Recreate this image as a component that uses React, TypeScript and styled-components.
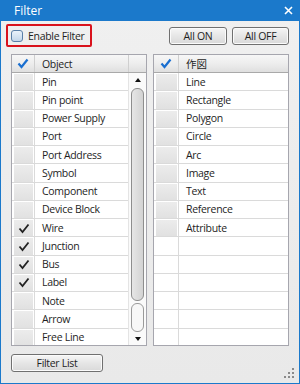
import React from 'react';
import styled, { createGlobalStyle } from 'styled-components';

const Global = createGlobalStyle`
  html, body { margin: 0; padding: 0; background: #ffffff; }
  body { font-family: "Open Sans", "Noto Sans", "Noto Sans CJK JP", sans-serif; }
`;

const Win = styled.div`
  width: 300px;
  height: 384px;
  box-sizing: border-box;
  border: 1px solid #1b79cb;
  border-top: none;
  display: flex;
  flex-direction: column;
  background: linear-gradient(180deg, #f0f0f0 0%, #e9e9e9 100%);
`;

const TitleBar = styled.div`
  height: 21px;
  flex: none;
  margin: 0 -1px;
  background: #1b79cb;
  color: #ffffff;
  display: flex;
  align-items: center;
  justify-content: space-between;
  padding: 0 7px 0 14px;
  font-size: 12px;
`;

const Body = styled.div`
  flex: 1;
  display: flex;
  flex-direction: column;
  padding: 3px 10px 0 10px;
  position: relative;
`;

const TopRow = styled.div`
  height: 23px;
  display: flex;
  align-items: center;
  justify-content: space-between;
`;

const Highlight = styled.div`
  margin-left: -5px;
  height: 23px;
  width: 86px;
  box-sizing: border-box;
  border: 2px solid #d9121c;
  border-radius: 2px;
  display: flex;
  align-items: center;
  gap: 5px;
  padding-left: 3px;
  font-size: 10.5px;
  letter-spacing: -0.3px;
  color: #1e1e1e;
`;

const Box = styled.span`
  width: 12px;
  height: 12px;
  box-sizing: border-box;
  border: 1px solid #5a7fa8;
  border-radius: 3px;
  background: linear-gradient(180deg, #eaf2fb 0%, #c3d6ea 100%);
  display: inline-block;
`;

const Buttons = styled.div`
  display: flex;
  gap: 5px;
`;

const Btn = styled.div<{ $w: number }>`
  width: ${(p) => p.$w}px;
  height: 18px;
  box-sizing: border-box;
  border: 1px solid #707070;
  border-radius: 3px;
  background: linear-gradient(180deg, #f6f6f6 0%, #e6e6e6 50%, #d9d9d9 100%);
  box-shadow: inset 0 0 0 1px #fbfbfb;
  display: flex;
  align-items: center;
  justify-content: center;
  font-size: 10.5px;
  letter-spacing: -0.3px;
  color: #1e1e1e;
`;

const Grids = styled.div`
  margin-top: 7px;
  height: 292px;
  display: flex;
  gap: 6px;
`;

const Grid = styled.div`
  width: 136px;
  box-sizing: border-box;
  border: 1px solid #a6a6ae;
  background: #ffffff;
  display: flex;
  flex-direction: column;
  overflow: hidden;
`;

const Header = styled.div<{ $cols: string }>`
  height: 18px;
  flex: none;
  box-sizing: border-box;
  display: grid;
  grid-template-columns: ${(p) => p.$cols};
  background: linear-gradient(180deg, #f7f7f7 0%, #ececec 55%, #dfdfdf 100%);
  border-bottom: 1px solid #a9a9a9;
`;

const HCell = styled.div<{ $center?: boolean; $cjk?: boolean }>`
  display: flex;
  align-items: center;
  justify-content: ${(p) => (p.$center ? 'center' : 'flex-start')};
  padding-left: ${(p) => (p.$center ? 0 : 7)}px;
  border-right: 1px solid #cfcfcf;
  font-size: 10.5px;
  letter-spacing: ${(p) => (p.$cjk ? 0 : -0.3)}px;
  font-family: ${(p) => (p.$cjk ? '"Noto Sans CJK JP", sans-serif' : 'inherit')};
  color: #1e1e1e;
  &:last-child { border-right: none; }
`;

const ListArea = styled.div`
  flex: 1;
  display: flex;
  min-height: 0;
`;

const List = styled.div`
  flex: 1;
  display: flex;
  flex-direction: column;
`;

const Row = styled.div<{ $cols: string }>`
  height: 18.25px;
  flex: none;
  box-sizing: border-box;
  display: grid;
  grid-template-columns: ${(p) => p.$cols};
  border-bottom: 1px solid #dadada;
`;

const CheckCell = styled.div`
  box-sizing: border-box;
  border-right: 1px solid #dadada;
  padding: 1px 1px 0 2px;
  display: flex;
`;

const CheckFill = styled.div`
  flex: 1;
  background: linear-gradient(180deg, #ececec 0%, #e1e1e1 100%);
  display: flex;
  align-items: center;
  justify-content: center;
`;

const TextCell = styled.div`
  display: flex;
  align-items: center;
  padding-left: 7px;
  font-size: 10.5px;
  letter-spacing: -0.3px;
  color: #1e1e1e;
  white-space: nowrap;
`;

const Scroll = styled.div`
  width: 17px;
  flex: none;
  display: flex;
  flex-direction: column;
  align-items: center;
  background: #fafafa;
  border-left: 1px solid #e4e4e4;
`;

const Arrow = styled.div<{ $down?: boolean }>`
  height: 13px;
  flex: none;
  display: flex;
  align-items: center;
  justify-content: center;
  &::after {
    content: '';
    border-left: 3.5px solid transparent;
    border-right: 3.5px solid transparent;
    ${(p) => (p.$down ? 'border-top: 4px solid #111;' : 'border-bottom: 4px solid #111;')}
  }
`;

const Track = styled.div`
  flex: 1;
  width: 13px;
  display: flex;
  flex-direction: column;
  gap: 2px;
  padding-top: 2px;
`;

const Thumb = styled.div`
  flex: 1;
  box-sizing: border-box;
  border: 1px solid #8e8e8e;
  border-radius: 6px;
  background: linear-gradient(90deg, #e6e6e6 0%, #d3d3d3 100%);
`;

const TrackRest = styled.div`
  height: 29px;
  flex: none;
  box-sizing: border-box;
  border: 1px solid #9a9a9a;
  border-radius: 6px;
  background: #f7f7f7;
`;

const Bottom = styled.div`
  margin-top: 8px;
  display: flex;
`;

const Grip = styled.svg`
  position: absolute;
  right: 5px;
  bottom: 5px;
`;

const Check = ({ color = '#222', w = 1.8 }: { color?: string; w?: number }) => (
  <svg width="12" height="11" viewBox="0 0 12 11">
    <polyline points="1.5,5.5 4.5,9 10.5,1.5" fill="none" stroke={color} strokeWidth={w} />
  </svg>
);

const left = [
  ['Pin', false], ['Pin point', false], ['Power Supply', false], ['Port', false],
  ['Port Address', false], ['Symbol', false], ['Component', false], ['Device Block', false],
  ['Wire', true], ['Junction', true], ['Bus', true], ['Label', true],
  ['Note', false], ['Arrow', false], ['Free Line', false],
] as [string, boolean][];

const right = ['Line', 'Rectangle', 'Polygon', 'Circle', 'Arc', 'Image', 'Text', 'Reference', 'Attribute', '', '', '', '', '', ''];

export default function App() {
  return (
    <>
      <Global />
      <Win>
        <TitleBar>
          <span>Filter</span>
          <svg width="9" height="9" viewBox="0 0 9 9">
            <path d="M1 1 L8 8 M8 1 L1 8" stroke="#fff" strokeWidth="1.6" />
          </svg>
        </TitleBar>
        <Body>
          <TopRow>
            <Highlight>
              <Box />
              <span>Enable Filter</span>
            </Highlight>
            <Buttons>
              <Btn $w={58}>All ON</Btn>
              <Btn $w={57}>All OFF</Btn>
            </Buttons>
          </TopRow>
          <Grids>
            <Grid>
              <Header $cols="23px 1fr 17px">
                <HCell $center><Check color="#1a6fd0" w={2.2} /></HCell>
                <HCell>Object</HCell>
                <HCell />
              </Header>
              <ListArea>
                <List>
                  {left.map(([t, c]) => (
                    <Row key={t} $cols="23px 1fr">
                      <CheckCell><CheckFill>{c && <Check />}</CheckFill></CheckCell>
                      <TextCell>{t}</TextCell>
                    </Row>
                  ))}
                </List>
                <Scroll>
                  <Arrow />
                  <Track>
                    <Thumb />
                    <TrackRest />
                  </Track>
                  <Arrow $down />
                </Scroll>
              </ListArea>
            </Grid>
            <Grid>
              <Header $cols="25px 1fr">
                <HCell $center><Check color="#1a6fd0" w={2.2} /></HCell>
                <HCell $cjk>作図</HCell>
              </Header>
              <List>
                {right.map((t, i) => (
                  <Row key={i} $cols="25px 1fr">
                    {t ? (
                      <CheckCell><CheckFill /></CheckCell>
                    ) : (
                      <CheckCell />
                    )}
                    <TextCell>{t}</TextCell>
                  </Row>
                ))}
              </List>
            </Grid>
          </Grids>
          <Bottom>
            <Btn $w={92}>Filter List</Btn>
          </Bottom>
          <Grip width="10" height="10" viewBox="0 0 10 10">
            {[[8, 0], [8, 4], [4, 4], [8, 8], [4, 8], [0, 8]].map(([x, y], i) => (
              <rect key={i} x={x} y={y} width="2" height="2" fill="#8a8a8a" />
            ))}
          </Grip>
        </Body>
      </Win>
    </>
  );
}
